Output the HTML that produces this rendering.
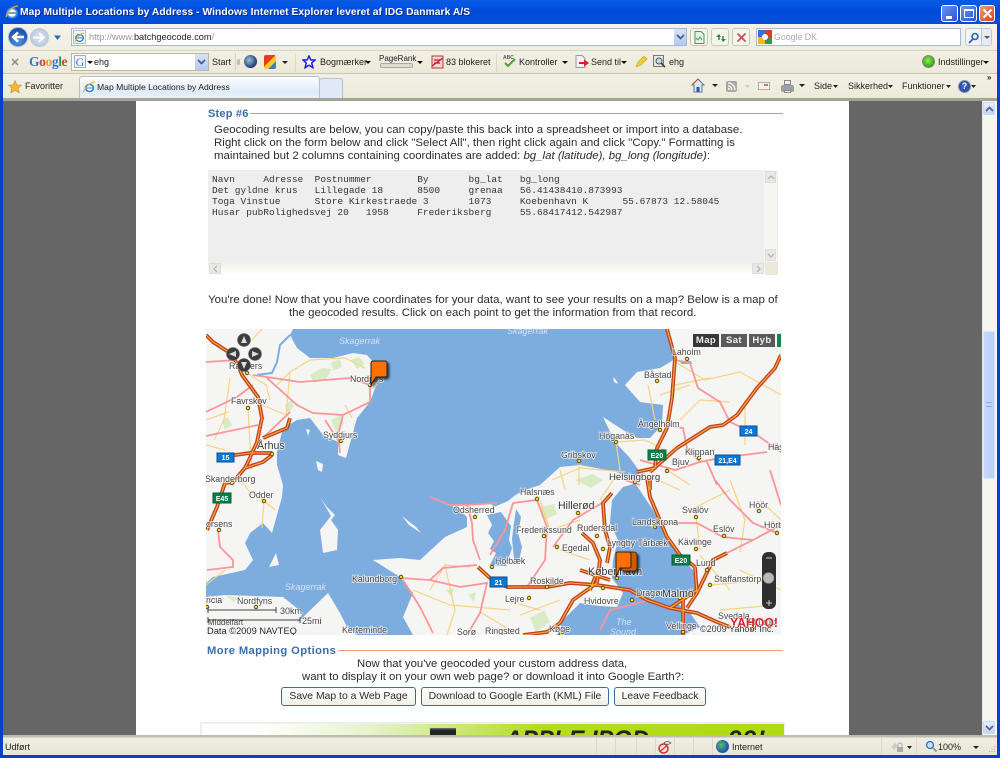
<!DOCTYPE html>
<html><head><meta charset="utf-8"><title>Map Multiple Locations by Address</title>
<style>
html,body{margin:0;padding:0;width:1000px;height:758px;overflow:hidden;background:#ece9d8}
body{position:relative;font-family:"Liberation Sans",sans-serif;color:#222}
div,span,svg{position:absolute;box-sizing:border-box}
.t{white-space:nowrap;font-size:9px;color:#1c1c1c}
.c{white-space:nowrap;font-size:11.46px;color:#2c2c2c;line-height:14px}
.m{font-family:"Liberation Mono",monospace;font-size:9.5px;white-space:pre;color:#333;left:212px}
.btn{height:19px;top:687px;border:1px solid #3e6a96;border-radius:3px;background:linear-gradient(#fff,#f2f0e6);font-size:10.4px;line-height:17px;text-align:center;color:#2c2c2c;white-space:nowrap}
.h{font-weight:bold;color:#3d6da4;font-size:11px;white-space:nowrap}
.sep{width:1px;background:#dcd9c8}
.mb{top:334px;height:13px;width:26px;background:#5a5a5a;color:#eee;font-size:9.5px;font-weight:bold;text-align:center;line-height:13px;letter-spacing:.4px}
svg text{font-family:"Liberation Sans",sans-serif;font-size:8.8px;fill:#444;paint-order:stroke;stroke:#fff;stroke-width:1.6px;stroke-opacity:.8}
svg text.l{font-size:10.6px;fill:#333}
svg text.w{fill:#d4e3f5;stroke:none;font-style:italic;font-size:9px}
svg text.s{fill:#fff;stroke:none;font-size:7px;font-weight:bold;text-anchor:middle}
.pk path{fill:none;stroke:#fd9498;stroke-width:1.8}
.yl path{fill:none;stroke:#f6d384;stroke-width:1.2}
.mo1 path{fill:none;stroke:#c33f22;stroke-width:3.8;stroke-linejoin:round}
.mo2 path{fill:none;stroke:#f5b53c;stroke-width:1.1}
</style></head><body>

<!-- window frame -->
<div style="left:0;top:0;width:1000px;height:24px;background:linear-gradient(#0a5be0 0,#0458e6 3px,#0149d8 12px,#0150dc 21px,#0a4bc8 24px)"></div>
<div style="left:0;top:24px;width:3px;height:734px;background:#0a3fd0"></div>
<div style="left:997px;top:24px;width:3px;height:734px;background:#0a3fd0"></div>
<div style="left:0;top:755px;width:1000px;height:3px;background:#0a3fc8"></div>
<svg style="left:5px;top:5px" width="14" height="14" viewBox="0 0 14 14"><ellipse cx="7" cy="8" rx="5" ry="4.6" fill="#fff" stroke="#3b8fd6" stroke-width="1.7"/><path d="M3 8h8" stroke="#2d7cc4" stroke-width="1.4"/><path d="M1 12C3 6 8 1 13 1" stroke="#f2b233" stroke-width="1.2" fill="none"/></svg>
<div class="t" style="left:20px;top:7px;color:#fff;font-size:10.25px;font-weight:bold;letter-spacing:.05px;text-shadow:1px 1px 0 #0a2a90">Map Multiple Locations by Address - Windows Internet Explorer leveret af IDG Danmark A/S</div>
<div style="left:941px;top:5px;width:17px;height:17px;border:1px solid #fff;border-radius:3px;background:linear-gradient(135deg,#6b94ee,#2a55d5)"><div style="left:4px;top:10px;width:6px;height:3px;background:#fff"></div></div>
<div style="left:960px;top:5px;width:17px;height:17px;border:1px solid #fff;border-radius:3px;background:linear-gradient(135deg,#6b94ee,#2a55d5)"><div style="left:3px;top:3px;width:10px;height:9px;border:1px solid #fff;border-top:2px solid #fff"></div></div>
<div style="left:979px;top:5px;width:16px;height:17px;border:1px solid #fff;border-radius:3px;background:linear-gradient(135deg,#ee9a7c,#d8401c)"><svg style="left:2px;top:2px" width="11" height="11"><path d="M1.5 1.5l8 8M9.5 1.5l-8 8" stroke="#fff" stroke-width="2"/></svg></div>

<!-- address row -->
<div style="left:3px;top:24px;width:994px;height:27px;background:linear-gradient(#f4f3ea,#efeee2);border-bottom:1px solid #d6d3c2"></div>
<div style="left:8px;top:27px;width:20px;height:20px;border-radius:50%;background:radial-gradient(circle at 50% 70%,#5a9de6,#1c4fa8 70%);border:1px solid #9db6d8"></div>
<svg style="left:10px;top:30px" width="16" height="14"><path d="M14 7H4M8 2.5L3 7l5 4.5" fill="none" stroke="#fff" stroke-width="2.4"/></svg>
<div style="left:30px;top:28px;width:19px;height:19px;border-radius:50%;background:radial-gradient(circle,#dde6f2,#aec0d8);border:1px solid #c0cad8"></div>
<svg style="left:32px;top:31px" width="15" height="13"><path d="M1 6.5h10M7 2l4.5 4.5L7 11" fill="none" stroke="#fff" stroke-width="2"/></svg>
<svg style="left:53px;top:35px" width="9" height="6"><path d="M1 .5h7L4.5 5z" fill="#2d6bb0"/></svg>
<div style="left:71px;top:28px;width:616px;height:18px;background:#fff;border:1px solid #a4b8d4"></div>
<svg style="left:73px;top:30px" width="13" height="14"><rect x=".5" y=".5" width="12" height="13" fill="#f6f6f0" stroke="#bbb"/><ellipse cx="6.5" cy="8" rx="3.8" ry="3.4" fill="#fff" stroke="#2c82cc" stroke-width="1.4"/><path d="M3 8h7" stroke="#2c82cc"/><path d="M2 12C4 7 8 3 11 3" stroke="#eaa92c" fill="none"/></svg>
<div class="t" style="left:89px;top:32px;font-size:9.2px;color:#999">http://www.<span style="position:static;color:#222">batchgeocode.com</span>/</div>
<div style="left:674px;top:29px;width:12px;height:16px;background:linear-gradient(#d6e2f8,#b6c9f2)"><svg style="left:2px;top:5px" width="9" height="6"><path d="M1 1l3.500 3.500L8 1" fill="none" stroke="#46587e" stroke-width="1.6"/></svg></div>
<div style="left:690px;top:28px;width:18px;height:18px;border:1px solid #c5c8b8;border-radius:3px;background:#f6f5ec"><svg style="left:3px;top:2px" width="11" height="13"><path d="M1 .5h6l3 3v9H1z" fill="#e8f4e6" stroke="#4a9c58"/><path d="M2 7l2 2 2-3 2 3" fill="none" stroke="#4a9c58"/></svg></div>
<div style="left:711px;top:28px;width:18px;height:18px;border:1px solid #c5c8b8;border-radius:3px;background:#f6f5ec"><svg style="left:2px;top:3px" width="14" height="12"><path d="M2 5l3-3 2 3zM12 7l-3 3-2-3z" fill="#268a3c"/><path d="M5 4v4M9 8V4" stroke="#268a3c" stroke-width="1.4"/></svg></div>
<div style="left:732px;top:28px;width:18px;height:18px;border:1px solid #c5c8b8;border-radius:3px;background:#f6f5ec"><svg style="left:3px;top:3px" width="11" height="11"><path d="M1.5 1.5l8 8M9.5 1.5l-8 8" stroke="#c84c4c" stroke-width="1.7"/></svg></div>
<div style="left:756px;top:28px;width:205px;height:18px;background:#fff;border:1px solid #a4b8d4"></div>
<svg style="left:758px;top:30px" width="14" height="14"><rect width="7" height="7" fill="#3a6fd8"/><rect x="7" width="7" height="7" fill="#d83c2c"/><rect y="7" width="7" height="7" fill="#f0b81c"/><rect x="7" y="7" width="7" height="7" fill="#2e9c44"/><circle cx="7" cy="7" r="3" fill="#fff"/></svg>
<div class="t" style="left:774px;top:32px;font-size:8.8px;color:#aaa">Google DK</div>
<div style="left:965px;top:28px;width:17px;height:18px;border:1px solid #bcc8d8;border-radius:3px 0 0 3px;background:#f2f4f6"><svg style="left:2px;top:3px" width="12" height="12"><circle cx="7" cy="4.500" r="3" fill="none" stroke="#2a5ec4" stroke-width="1.6"/><path d="M5 7l-4 4" stroke="#2a5ec4" stroke-width="1.8"/></svg></div>
<div style="left:982px;top:28px;width:10px;height:18px;border:1px solid #bcc8d8;border-left:0;border-radius:0 3px 3px 0;background:#e6ebf2"><svg style="left:2px;top:7px" width="6" height="4"><path d="M0 0h6L3 3z" fill="#46587e"/></svg></div>

<!-- google toolbar -->
<div style="left:3px;top:51px;width:994px;height:23px;background:linear-gradient(#f2f0e4,#ece9d9);border-bottom:1px solid #c9c6b4"></div>
<svg style="left:11px;top:58px" width="8" height="8"><path d="M1 1l6 6M7 1L1 7" stroke="#8a8a80" stroke-width="1.500"/></svg>
<div style="left:29px;top:54px;font-family:'Liberation Serif',serif;font-weight:bold;font-size:13.5px;letter-spacing:-.4px;white-space:nowrap"><span style="position:static;color:#3a6fd8">G</span><span style="position:static;color:#d83c2c">o</span><span style="position:static;color:#e0a818">o</span><span style="position:static;color:#3a6fd8">g</span><span style="position:static;color:#2e9c44">l</span><span style="position:static;color:#d83c2c">e</span></div>
<div style="left:71px;top:53px;width:138px;height:18px;background:#fff;border:1px solid #b8b6a6"></div>
<div style="left:74px;top:55px;width:12px;height:13px;border:1px solid #8fb0c8;background:#f4f8fa;font-family:'Liberation Serif',serif;font-size:12px;line-height:12px;color:#3a6fd8;text-align:center">G</div>
<svg style="left:87px;top:61px" width="6" height="4"><path d="M0 0h6L3 3z" fill="#111"/></svg>
<div class="t" style="left:94px;top:57px;font-size:9px">ehg</div>
<div style="left:195px;top:54px;width:13px;height:16px;background:linear-gradient(#d6e2f8,#b6c9f2)"><svg style="left:2px;top:5px" width="9" height="6"><path d="M1 1l3.500 3.500L8 1" fill="none" stroke="#46587e" stroke-width="1.600"/></svg></div>
<div class="t" style="left:212px;top:57px">Start</div>
<div style="left:237px;top:59px;width:3px;height:6px;background:#c0bfb2;border-radius:2px"></div><div style="left:235px;top:53px;width:1px;height:18px;background:#d6d3c2"></div>
<div style="left:244px;top:55px;width:13px;height:13px;border-radius:50%;background:radial-gradient(circle at 40% 40%,#9cc0dc,#1c3c70 70%)"></div>
<div style="left:264px;top:55px;width:12px;height:14px;background:linear-gradient(135deg,#e83c1c 45%,#f8cc20 46% 70%,#3c78d8 71%);border-radius:2px"></div>
<svg style="left:282px;top:61px" width="6" height="4"><path d="M0 0h6L3 3z" fill="#222"/></svg>
<div class="sep" style="left:295px;top:53px;height:19px"></div>
<svg style="left:302px;top:55px" width="14" height="14"><path d="M7 1l1.800 4H13L9.700 8l1.200 4.600L7 10.200l-3.900 2.400L4.300 8 1 5h4.200z" fill="#fff" stroke="#1c1cd8" stroke-width="1.500"/></svg>
<div class="t" style="left:320px;top:57px">Bogmærker</div>
<svg style="left:365px;top:61px" width="6" height="4"><path d="M0 0h6L3 3z" fill="#111"/></svg>
<div class="t" style="left:379px;top:54px;font-size:8px">PageRank</div>
<div style="left:380px;top:63px;width:33px;height:5px;background:#dedcd0;border:1px solid #aaa;border-radius:2px"></div>
<svg style="left:417px;top:61px" width="6" height="4"><path d="M0 0h6L3 3z" fill="#111"/></svg>
<svg style="left:431px;top:55px" width="14" height="14"><rect x="1" y="1" width="11" height="12" fill="#f4d4d4" stroke="#b83838"/><path d="M1 11L12 3M3 5h6M3 8h6" stroke="#c01c1c" stroke-width="1.200"/></svg>
<div class="t" style="left:446px;top:57px">83 blokeret</div>
<div class="sep" style="left:496px;top:53px;height:19px"></div>
<svg style="left:503px;top:54px" width="14" height="15"><text x="0" y="5" style="font-size:5px;font-weight:bold;stroke:none;fill:#555">ABC</text><path d="M2 9l3 3 7-7" fill="none" stroke="#4c9c38" stroke-width="2"/></svg>
<div class="t" style="left:519px;top:57px">Kontroller</div>
<svg style="left:562px;top:61px" width="6" height="4"><path d="M0 0h6L3 3z" fill="#111"/></svg>
<svg style="left:575px;top:55px" width="15" height="14"><path d="M1 .5h6l3 3v9H1z" fill="#f4f4f4" stroke="#999"/><path d="M4 7h5V4.500l5 3.500-5 3.500V9H4z" fill="#d81c2c"/></svg>
<div class="t" style="left:591px;top:57px">Send til</div>
<svg style="left:621px;top:61px" width="6" height="4"><path d="M0 0h6L3 3z" fill="#111"/></svg>
<svg style="left:635px;top:55px" width="13" height="14"><path d="M1 12L3 7l6-6 3 3-6 6z" fill="#f0cc34" stroke="#c8a020" stroke-width=".6"/></svg>
<svg style="left:653px;top:55px" width="14" height="14"><rect x=".5" y=".5" width="10" height="11" fill="#e4e8ec" stroke="#777"/><circle cx="6" cy="6" r="3" fill="#c8d8e8" stroke="#555"/><path d="M8 8l4 4" stroke="#444" stroke-width="1.600"/></svg>
<div class="t" style="left:669px;top:57px">ehg</div>
<div style="left:922px;top:55px;width:13px;height:13px;border-radius:50%;background:radial-gradient(circle at 45% 40%,#90ee50,#2ea010 75%);border:1px solid #888"></div>
<div class="t" style="left:938px;top:57px">Indstillinger</div>
<svg style="left:983px;top:61px" width="6" height="4"><path d="M0 0h6L3 3z" fill="#111"/></svg>

<!-- tabs row -->
<div style="left:3px;top:74px;width:994px;height:25px;background:linear-gradient(#f2f0e6,#ecead9)"></div>
<svg style="left:8px;top:80px" width="14" height="14"><path d="M7 .5l2 4.500h4.500L10 8l1.300 5L7 10.200 2.700 13 4 8 .5 5H5z" fill="#f4b838" stroke="#c88c20" stroke-width=".6"/></svg>
<div class="t" style="left:25px;top:81px">Favoritter</div>
<div style="left:79px;top:76px;width:241px;height:22px;background:linear-gradient(#fdfdfd,#dfeaf8 70%,#e8f0fa);border:1px solid #b8c0c8;border-bottom:0;border-radius:3px 3px 0 0"></div>
<svg style="left:83px;top:80px" width="13" height="14"><ellipse cx="6.500" cy="8" rx="4" ry="3.500" fill="#fff" stroke="#2c82cc" stroke-width="1.500"/><path d="M3 8h7" stroke="#2c82cc"/><path d="M.5 12C3 6 8 2 12 2" stroke="#eaa92c" fill="none"/></svg>
<div class="t" style="left:97px;top:82px;font-size:8.6px">Map Multiple Locations by Address</div>
<div style="left:319px;top:78px;width:24px;height:20px;background:#e0e9f6;border:1px solid #b8c0c8;border-bottom:0;border-radius:3px 3px 0 0"></div>
<svg style="left:691px;top:78px" width="14" height="15"><path d="M7 1L1 7h2v7h8V7h2z" fill="#dfe6f0" stroke="#5a7a9c"/><rect x="5.500" y="9" width="3" height="5" fill="#2858a8"/><path d="M7 1L1 7" stroke="#c85020"/></svg>
<svg style="left:712px;top:84px" width="6" height="4"><path d="M0 0h6L3 3z" fill="#222"/></svg>
<div style="left:726px;top:81px;width:11px;height:11px;background:#a8a8a0;border-radius:2px"></div>
<svg style="left:727px;top:82px" width="9" height="9"><path d="M1 1a7 7 0 0 1 7 7M1 4a4 4 0 0 1 4 4" stroke="#fff" fill="none" stroke-width="1.200"/><circle cx="2" cy="7" r="1" fill="#fff"/></svg>
<svg style="left:745px;top:85px" width="5" height="3"><path d="M0 0h5L2.500 3z" fill="#ccc"/></svg>
<div style="left:758px;top:82px;width:12px;height:8px;background:#f4f2ee;border:1px solid #b0b0a8"></div>
<div style="left:764px;top:84px;width:4px;height:2px;background:#d87070"></div>
<div style="left:781px;top:85px;width:13px;height:7px;background:#99a0a6;border-radius:2px"></div>
<div style="left:784px;top:80px;width:7px;height:5px;background:#f0f0f0;border:1px solid #888"></div>
<div style="left:784px;top:90px;width:7px;height:3px;background:#fff;border:1px solid #888"></div>
<svg style="left:799px;top:84px" width="6" height="4"><path d="M0 0h6L3 3z" fill="#222"/></svg>
<div class="t" style="left:814px;top:81px">Side</div><svg style="left:833px;top:85px" width="5" height="3"><path d="M0 0h5L2.500 3z" fill="#222"/></svg>
<div class="t" style="left:848px;top:81px">Sikkerhed</div><svg style="left:888px;top:85px" width="5" height="3"><path d="M0 0h5L2.500 3z" fill="#222"/></svg>
<div class="t" style="left:902px;top:81px">Funktioner</div><svg style="left:946px;top:85px" width="5" height="3"><path d="M0 0h5L2.500 3z" fill="#222"/></svg>
<div style="left:958px;top:80px;width:13px;height:13px;border-radius:50%;background:radial-gradient(circle,#3f6cd0,#1c3a90);border:1px solid #8898b8;color:#fff;font-size:9px;font-weight:bold;line-height:11px;text-align:center">?</div>
<svg style="left:971px;top:85px" width="5" height="3"><path d="M0 0h5L2.500 3z" fill="#222"/></svg>
<div class="t" style="left:987px;top:73px;font-size:8px;font-weight:bold">»</div>
<div style="left:3px;top:98px;width:994px;height:3px;background:#a4a397"></div>

<!-- page -->
<div style="left:3px;top:101px;width:979px;height:634px;background:#666"></div>
<div style="left:136px;top:101px;width:713px;height:634px;background:#fff;overflow:hidden"></div>
<!-- scrollbar -->
<div style="left:982px;top:101px;width:15px;height:634px;background:#f6f6f0;border-left:1px solid #e8e8e0"></div>
<div style="left:983px;top:102px;width:12px;height:13px;background:linear-gradient(#e6eeff,#c4d5fa);border:1px solid #c8d8f8;border-radius:2px"><svg style="left:1px;top:3px" width="9" height="6"><path d="M1 5l3.500-3.500L8 5" fill="none" stroke="#4d6185" stroke-width="1.700"/></svg></div>
<div style="left:983px;top:331px;width:12px;height:148px;background:linear-gradient(90deg,#c9d8fb,#b8cdf8);border:1px solid #dae4fa;border-radius:2px"></div>
<div style="left:986px;top:402px;width:6px;height:5px;border-top:1px solid #8ea8de;border-bottom:1px solid #8ea8de"></div>
<div style="left:983px;top:721px;width:12px;height:13px;background:linear-gradient(#e6eeff,#c4d5fa);border:1px solid #c8d8f8;border-radius:2px"><svg style="left:1px;top:3px" width="9" height="6"><path d="M1 1l3.500 3.500L8 1" fill="none" stroke="#4d6185" stroke-width="1.700"/></svg></div>

<!-- step heading -->
<div class="h" style="left:208px;top:108px;letter-spacing:.2px">Step #6</div>
<div style="left:250px;top:113px;width:533px;height:1px;background:#f08e6e"></div>
<div class="c" style="left:214px;top:123px">Geocoding results are below, you can copy/paste this back into a spreadsheet or import into a database.</div>
<div class="c" style="left:214px;top:136px">Right click on the form below and click "Select All", then right click again and click "Copy." Formatting is</div>
<div class="c" style="left:214px;top:149px">maintained but 2 columns containing coordinates are added: <i>bg_lat (latitude), bg_long (longitude)</i>:</div>

<!-- textarea -->
<div style="left:208px;top:170px;width:570px;height:105px;background:#eee"></div>
<div style="left:208px;top:262px;width:570px;height:13px;background:linear-gradient(#f0efe6,#fff)"></div>
<div style="left:764px;top:170px;width:13px;height:92px;background:#f6f6f0"></div>
<div style="left:765px;top:171px;width:11px;height:12px;background:#e8e8e4;border:1px solid #ddd"><svg style="left:1px;top:3px" width="8" height="5"><path d="M1 4l3-3 3 3" fill="none" stroke="#aaa"/></svg></div>
<div style="left:765px;top:249px;width:11px;height:12px;background:#e8e8e4;border:1px solid #ddd"><svg style="left:1px;top:3px" width="8" height="5"><path d="M1 1l3 3 3-3" fill="none" stroke="#aaa"/></svg></div>
<div style="left:209px;top:263px;width:12px;height:11px;background:#e8e8e4;border:1px solid #ddd"><svg style="left:3px;top:1px" width="5" height="8"><path d="M4 1L1 4l3 3" fill="none" stroke="#aaa"/></svg></div>
<div style="left:752px;top:263px;width:12px;height:11px;background:#e8e8e4;border:1px solid #ddd"><svg style="left:3px;top:1px" width="5" height="8"><path d="M1 1l3 3-3 3" fill="none" stroke="#aaa"/></svg></div>
<div style="left:765px;top:262px;width:13px;height:13px;background:#ece9d8"></div>
<div class="m" style="top:174px">Navn     Adresse  Postnummer        By       bg_lat   bg_long</div>
<div class="m" style="top:185px">Det gyldne krus   Lillegade 18      8500     grenaa   56.41438410.873993</div>
<div class="m" style="top:196px">Toga Vinstue      Store Kirkestraede 3       1073     Koebenhavn K      55.67873 12.58045</div>
<div class="m" style="top:207px">Husar pubRolighedsvej 20   1958     Frederiksberg     55.68417412.542987</div>

<div class="c" style="left:208px;top:293px">You're done! Now that you have coordinates for your data, want to see your results on a map? Below is a map of</div>
<div class="c" style="left:289px;top:306px">the geocoded results. Click on each point to get the information from that record.</div>

<!-- MAP -->
<svg style="left:206px;top:329px" width="575" height="306" viewBox="206 329 575 306">
<rect x="206" y="329" width="575" height="306" fill="#7dacdf"/>
<!-- land -->
<g fill="#f5f5f4">
<path d="M206 329H293L290 335 297 348 310 358 333 358 353 353 367 355 373 362 377 383 370 402 357 418 346 458 338 455 338 442 323 435 310 418 297 420 283 428 277 452 277 465 283 485 282 497 272 533 263 523 250 533 245 543 253 560 245 570 213 577 206 583Z"/>
<path d="M206 597L225 595 283 597 303 613 297 623 328 593 340 613 347 627 357 635H206Z"/>
<path d="M320 497L327 507 335 515 331 520 338 530 337 550 323 553 320 530 331 516Z"/>
<path d="M430 497L450 505 467 505 500 503 525 490 540 485 560 467 580 465 617 472 637 483 623 487 612 500 610 523 618 540 613 560 612 578 623 593 617 607 600 606 580 603 563 620 557 635H413L403 617 413 593 400 577 373 560 400 558 420 560 445 537 467 527 467 517 457 508Z"/>
<path d="M667 329H781V635H683L700 627 690 613 677 603 697 587 693 570 677 553 663 530 653 510 633 480 640 472 630 458 615 442 603 417 623 430 637 438 650 438 662 425 663 405 640 402 625 385 637 372 660 368 677 358 672 348Z"/>
<path d="M640 635L628 615 634 600 622 610 620 635Z" fill="#7dacdf"/>
<path d="M230 540l8-4 6 3-7 5zM306 429l4 1-2 6zM316 461l7 3-1 8-4-2zM402 516l14 11 5 6-12-8zM435 548l3 6-3 4zM276 553l3 12-10 2zM490 505l7 2-1 5z"/>
<path d="M613 377l3 3 2 4-4-2z"/>
</g>
<!-- fjords on Zealand -->
<g fill="#7dacdf">
<path d="M487 515l14 -3 10 14 -2 14 3 8 -6 18 -16 -1 6 -12 -6 -4 4 -8 -6 -8 4 -8z"/>
<path d="M516 509l5 8 -3 16 4 14 -3 14 -5 -2 -2 -20 2 -16z"/>
<path d="M490 503l14 -6 8 -12 6 8 -10 8 -14 6z"/>
<path d="M679 361h12l1 3h-10z"/>
</g>
<path d="M290 335L280 345 277 362 272 373 257 375" fill="none" stroke="#7dacdf" stroke-width="2"/>
<!-- green patches -->
<g fill="#d9ebc5">
<path d="M310 375l12-7 10 1-6 10-12 4zM351 360l8-3 6 7-8 5zM330 363l10-4 2 8-8 3zM222 420l6-3 4 8-7 5zM285 405l6-5 3 6-6 8zM331 420l10-5 3 8-7 12zM446 590l8-2-2 10zM468 595l8-3-2 10zM575 480l18-6 10 6-12 8zM540 507l14-3 3 10-12 6zM530 618l14-8 6 12-14 10zM650 525l6-2-2 7zM225 595l14 3-6 4z"/>
</g>
<!-- yellow roads -->
<g class="yl">
<path d="M252 340L262 329M230 378L224 420 214 440M247 373L266 385 270 400M290 372L310 360 345 358 365 368M277 385L290 372 286 415M248 408L250 445 252 470M206 420L228 412M206 445L225 450M262 405L286 415M345 405L352 418M370 385L378 385M264 501L248 490 240 478M264 501L275 510M264 501L262 528M206 585L225 570M430 590L445 565 455 610 447 635M413 590L450 605 510 610M480 612L510 630M445 565L470 567M625 472L580 468 552 480M579 461L579 485M560 470L565 490M672 360L705 380 740 372 781 395M675 385L710 378M648 385L655 420M660 395L690 385M700 400L730 402M680 420L700 400M616 442L620 470M616 442L645 440 665 450M667 470L690 485M640 472L680 490M745 400L745 445M760 500L781 520M730 480L745 520 740 552M690 510L730 490M696 517L700 550M710 585L770 580M740 570L781 590M720 610L775 605M540 500L550 530 580 520M560 550L590 560M505 600L540 610M520 615L560 600M600 500L620 470M700 555L730 590"/>
</g>
<!-- pink roads -->
<g class="pk">
<path d="M253 375L300 382 350 378 370 385 370 402 343 415 338 435 340 453M267 378L297 405 313 413 343 415M290 412L263 438M206 362L237 360M206 412L237 397 253 385M206 436L258 425M325 420L338 440M675 360L690 363 698 388 720 402 730 422 757 435 781 452M663 425L683 428 687 448 700 462 720 458 767 452M717 485L707 462M715 480L730 500 753 523 777 533M727 553L753 540 781 525M657 523L697 523 723 537 753 540M430 497L450 505 467 505 497 503M472 523L473 540 480 560M467 505L472 523M400 578L430 580 443 568 477 565M430 580L460 587 487 583 480 613 467 635M403 580L420 607 433 633M513 503L537 500 547 527 545 560 527 587M513 503L505 530 490 555M553 547L573 520 607 500M218 530L220 547 233 560 233 567 207 570M640 460L675 470 700 462M770 470L781 505M650 600L610 610 600 630M625 480L640 485"/>
</g>
<!-- motorways -->
<g class="mo1">
<path d="M206 335L213 342 230 353 238 365 242 375 258 397 262 418 257 442 248 462 245 468 233 482 225 483 217 507 207 530"/>
<path d="M290 418L287 428 263 438M220 457L250 453 272 453M245 468L263 462 272 455"/>
<path d="M667 329L675 358 672 398 667 428 657 448 655 468 637 472M781 355L775 368 757 388 737 415 723 425 710 427 677 448 650 472M647 478L650 497 667 537 680 555 695 567 697 593 687 608M727 553L713 560 697 593"/>
<path d="M612 493L603 503 605 530 610 547 607 563M582 533L593 543 600 560 597 583 573 600 560 623 547 632 523 635M478 567L490 578 507 587 527 587 547 587 570 583 597 585 630 590 647 600 670 608 697 613 717 622 730 627M683 600L683 635M670 608L697 590M600 565L590 590M580 570L610 580M650 478V490"/>
</g>
<g class="mo2">
<path d="M206 335L213 342 230 353 238 365 242 375 258 397 262 418 257 442 248 462 245 468 233 482 225 483 217 507 207 530"/>
<path d="M290 418L287 428 263 438M220 457L250 453 272 453M245 468L263 462 272 455"/>
<path d="M667 329L675 358 672 398 667 428 657 448 655 468 637 472M781 355L775 368 757 388 737 415 723 425 710 427 677 448 650 472M647 478L650 497 667 537 680 555 695 567 697 593 687 608M727 553L713 560 697 593"/>
<path d="M612 493L603 503 605 530 610 547 607 563M582 533L593 543 600 560 597 583 573 600 560 623 547 632 523 635M478 567L490 578 507 587 527 587 547 587 570 583 597 585 630 590 647 600 670 608 697 613 717 622 730 627M683 600L683 635M670 608L697 590M600 565L590 590M580 570L610 580M650 478V490"/>
</g>
<!-- dots -->
<g fill="#ffd800" stroke="#333" stroke-width=".8">
<circle cx="247" cy="373" r="1.800"/><circle cx="248" cy="408" r="1.800"/><circle cx="370" cy="385" r="1.800"/><circle cx="272" cy="454" r="1.800"/><circle cx="341" cy="441" r="1.800"/><circle cx="232" cy="483" r="1.800"/><circle cx="264" cy="501" r="1.800"/><circle cx="219" cy="530" r="1.800"/><circle cx="475" cy="517" r="1.800"/><circle cx="401" cy="577" r="1.800"/><circle cx="256" cy="607" r="1.800"/><circle cx="207" cy="607" r="1.800"/><circle cx="537" cy="499" r="1.800"/><circle cx="578" cy="513" r="1.800"/><circle cx="597" cy="536" r="1.800"/><circle cx="544" cy="536" r="1.800"/><circle cx="557" cy="547" r="1.800"/><circle cx="603" cy="549" r="1.800"/><circle cx="492" cy="567" r="1.800"/><circle cx="617" cy="578" r="1.800"/><circle cx="547" cy="587" r="1.800"/><circle cx="529" cy="598" r="1.800"/><circle cx="603" cy="588" r="1.800"/><circle cx="632" cy="600" r="1.800"/><circle cx="680" cy="598" r="1.800"/><circle cx="561" cy="635" r="1.800"/><circle cx="683" cy="632" r="1.800"/><circle cx="655" cy="527" r="1.800"/><circle cx="696" cy="517" r="1.800"/><circle cx="696" cy="549" r="1.800"/><circle cx="724" cy="536" r="1.800"/><circle cx="759" cy="511" r="1.800"/><circle cx="777" cy="533" r="1.800"/><circle cx="707" cy="570" r="1.800"/><circle cx="710" cy="585" r="1.800"/><circle cx="687" cy="359" r="1.800"/><circle cx="657" cy="381" r="1.800"/><circle cx="660" cy="430" r="1.800"/><circle cx="616" cy="442" r="1.800"/><circle cx="579" cy="461" r="1.800"/><circle cx="635" cy="482" r="1.800"/><circle cx="699" cy="458" r="1.800"/><circle cx="667" cy="471" r="1.800"/><circle cx="753" cy="629" r="1.800"/>
</g>
<!-- shields -->
<g>
<rect x="217" y="453" width="17" height="9" fill="#0a78d8" stroke="#0c4f8a"/><text class="s" x="225.500" y="460">15</text>
<rect x="213" y="493" width="18" height="10" fill="#088048" stroke="#06603a"/><text class="s" x="222" y="501">E45</text>
<rect x="648" y="450" width="18" height="10" fill="#088048" stroke="#06603a"/><text class="s" x="657" y="458">E20</text>
<rect x="740" y="426" width="17" height="10" fill="#0a78d8" stroke="#0c4f8a"/><text class="s" x="748.500" y="434">24</text>
<rect x="715" y="455" width="25" height="10" fill="#0a78d8" stroke="#0c4f8a"/><text class="s" x="727.500" y="463">21,E4</text>
<rect x="490" y="577" width="17" height="10" fill="#0a78d8" stroke="#0c4f8a"/><text class="s" x="498.500" y="585">21</text>
<rect x="672" y="555" width="18" height="10" fill="#088048" stroke="#06603a"/><text class="s" x="681" y="563">E20</text>
</g>
<!-- labels -->
<text x="229" y="369">Randers</text><text x="231" y="404">Favrskov</text><text x="350" y="382">Nordjurs</text><text class="l" x="257" y="449">Århus</text><text x="323" y="438">Syddjurs</text><text x="205" y="482">Skanderborg</text><text x="249" y="498">Odder</text><text x="206" y="527">orsens</text><text x="453" y="513">Odsherred</text><text x="352" y="582">Kalundborg</text><text x="237" y="604">Nordfyns</text><text x="206" y="603">ricia</text><text x="342" y="633">Kerteminde</text><text x="457" y="635">Sorø</text><text x="485" y="634">Ringsted</text>
<text x="520" y="495">Halsnæs</text><text class="l" x="558" y="509">Hillerød</text><text x="577" y="531">Rudersdal</text><text x="516" y="533">Frederikssund</text><text x="562" y="551">Egedal</text><text x="607" y="546">Lyngby Tårbæk</text><text x="495" y="564">Holbæk</text><text class="l" x="588" y="575">København</text><text x="530" y="584">Roskilde</text><text x="505" y="602">Lejre</text><text x="584" y="604">Hvidovre</text><text x="636" y="596">Dragør</text><text class="l" x="662" y="597">Malmö</text><text x="549" y="632">Køge</text><text x="666" y="629">Vellinge</text><text x="632" y="525">Landskrona</text><text x="682" y="513">Svalöv</text><text x="678" y="545">Kävlinge</text><text x="713" y="532">Eslöv</text><text x="749" y="508">Höör</text><text x="764" y="528">Hörby</text><text x="696" y="566">Lund</text><text x="714" y="582">Staffanstorp</text><text x="718" y="619">Svedala</text><text x="748" y="625">Skurup</text>
<text x="672" y="355">Laholm</text><text x="644" y="378">Båstad</text><text x="638" y="427">Ängelholm</text><text x="599" y="439">Höganäs</text><text x="561" y="458">Gribskov</text><text class="l" x="609" y="480" style="font-size:9.6px">Helsingborg</text><text x="685" y="455">Klippan</text><text x="672" y="465">Bjuv</text><text x="768" y="450">Häs</text>
<text class="w" x="339" y="344">Skagerrak</text><text class="w" x="507" y="334">Skagerrak</text><text class="w" x="285" y="590">Skagerrak</text><text class="w" x="616" y="625">The</text><text class="w" x="610" y="635">Sound</text>
<!-- markers -->
<path d="M373 361h12a2 2 0 0 1 2 2v12a2 2 0 0 1-2 2h-9l-5 8v-22a2 2 0 0 1 2-2z" fill="#ff7000" stroke="#222" stroke-width="1" style="filter:drop-shadow(2px 2px 1px rgba(0,0,0,.65))"/>
<rect x="621" y="552" width="16" height="19" rx="3" fill="#cc5c00" stroke="#222" stroke-width=".8" style="filter:drop-shadow(2px 2px 1px rgba(0,0,0,.65))"/>
<path d="M617 552h12a2 2 0 0 1 2 2v12a2 2 0 0 1-2 2h-9l-4 9v-23a2 2 0 0 1 1-2z" fill="#ff7000" stroke="#222" stroke-width="1"/>
<!-- scale -->
<path d="M208 607v6M208 610h68M276 607v6M208 617v6M208 620h92M300 617v6" stroke="#444" stroke-width="1" fill="none"/>
<text x="280" y="614" style="font-size:9px;stroke-width:1px">30km</text><text x="302" y="624" style="font-size:9px;stroke-width:1px">25mi</text>
<text x="208" y="625" style="font-size:8px;stroke:none">Middelfart</text>
<text x="207" y="634" style="font-size:9.300px;fill:#222;stroke-width:1px">Data ©2009 NAVTEQ</text>
<text x="730" y="627" style="font-size:13px;font-weight:bold;fill:#e0202c;stroke:#fff;stroke-width:1px" textLength="48" lengthAdjust="spacingAndGlyphs">YAHOO!</text>
<text x="700" y="632" style="font-size:9px;fill:#333;stroke-width:1px">©2009 Yahoo! Inc.</text>
<!-- nav -->
<g fill="#3c3c3c" stroke="#6a6a6a" stroke-width=".6">
<circle cx="244" cy="340" r="6.500"/><circle cx="233" cy="354" r="6.500"/><circle cx="255" cy="354" r="6.500"/><circle cx="244" cy="365" r="6.500"/>
</g>
<path d="M244 336l3 7h-6zM229 354l7-3v6zM259 354l-7-3v6zM244 369l3-7h-6z" fill="#ddd"/>
<!-- zoom -->
<rect x="762" y="552" width="14" height="57" rx="6" fill="#2f2f2f"/>
<path d="M766 558h6M766 603h6M769 600v6" stroke="#ccc" stroke-width="1"/>
<circle cx="768.500" cy="578" r="5.500" fill="#b8b8b8" stroke="#777" stroke-width=".6"/>
</svg>
<div class="mb" style="left:693px;background:#383838">Map</div>
<div class="mb" style="left:721px">Sat</div>
<div class="mb" style="left:749px">Hyb</div>
<div style="left:777px;top:334px;width:4px;height:13px;background:#0a8a4c"></div>

<!-- more mapping -->
<div class="h" style="left:207px;top:645px;font-size:11.2px;letter-spacing:.4px">More Mapping Options</div>
<div style="left:339px;top:650px;width:444px;height:1px;background:#f49a80"></div>
<div class="c" style="left:357px;top:657px;font-size:11.35px">Now that you've geocoded your custom address data,</div>
<div class="c" style="left:302px;top:670px;font-size:11.35px">want to display it on your own web page? or download it into Google Earth?:</div>
<div class="btn" style="left:281px;width:135px">Save Map to a Web Page</div>
<div class="btn" style="left:421px;width:188px">Download to Google Earth (KML) File</div>
<div class="btn" style="left:614px;width:92px">Leave Feedback</div>

<!-- banner -->
<div style="left:200px;top:722px;width:585px;height:13px;background:#eee"></div>
<div style="left:202px;top:724px;width:582px;height:11px;overflow:hidden;background:linear-gradient(90deg,#fff 0,#fff 10%,#e4f2c8 30%,#c6e45c 48%,#b4dc18 58%,#b0dc10 100%)">
<div style="left:228px;top:4px;width:26px;height:7px;background:linear-gradient(#777,#222 35%)"></div>
<div style="left:303px;top:2px;font:italic bold 23.8px 'Liberation Sans',sans-serif;color:#222;white-space:nowrap">APPLE IPOD</div>
<div style="left:526px;top:2px;font:italic bold 24.4px 'Liberation Sans',sans-serif;color:#222;white-space:nowrap;letter-spacing:1px">99!</div>
</div>

<!-- status bar -->
<div style="left:3px;top:735px;width:994px;height:20px;background:linear-gradient(#bdbcb0 0,#bdbcb0 2px,#f0eee2 3px,#e9e6d6 100%)"></div>
<div class="t" style="left:5px;top:742px">Udført</div>
<div class="sep" style="left:596px;top:738px;height:17px"></div><div class="sep" style="left:615px;top:738px;height:17px"></div><div class="sep" style="left:636px;top:738px;height:17px"></div><div class="sep" style="left:655px;top:738px;height:17px"></div><div class="sep" style="left:674px;top:738px;height:17px"></div><div class="sep" style="left:693px;top:738px;height:17px"></div><div class="sep" style="left:712px;top:738px;height:17px"></div><div class="sep" style="left:881px;top:738px;height:17px"></div><div class="sep" style="left:916px;top:738px;height:17px"></div>
<svg style="left:658px;top:740px" width="14" height="14"><circle cx="5.500" cy="8.500" r="4.500" fill="#f4e4e4" stroke="#d83030" stroke-width="1.500"/><path d="M2.500 11l6-5" stroke="#d83030" stroke-width="1.300"/><path d="M6 3q3-3 7 0-4 3-7 0z" fill="#ddd" stroke="#555" stroke-width=".7"/></svg>
<div style="left:716px;top:740px;width:13px;height:13px;border-radius:50%;background:radial-gradient(circle at 40% 40%,#5cc060,#1c5cb0 60%)"></div>
<div class="t" style="left:732px;top:742px">Internet</div>
<svg style="left:890px;top:741px" width="14" height="12"><path d="M1 6l4-4 3 3-4 4z" fill="#ccc"/><rect x="7" y="6" width="6" height="5" fill="#aaa"/><path d="M8 6V4a2 2 0 0 1 4 0v2" fill="none" stroke="#aaa"/></svg>
<svg style="left:907px;top:746px" width="5" height="3"><path d="M0 0h5L2.500 3z" fill="#222"/></svg>
<svg style="left:925px;top:740px" width="12" height="13"><circle cx="5" cy="5" r="3.500" fill="#c8e0f8" stroke="#2a6cc0" stroke-width="1.300"/><path d="M7.500 7.500l4 4" stroke="#888" stroke-width="1.600"/></svg>
<div class="t" style="left:938px;top:742px">100%</div>
<svg style="left:973px;top:746px" width="6" height="3"><path d="M0 0h6L3 3z" fill="#222"/></svg>
<svg style="left:988px;top:745px" width="8" height="8"><path d="M6 1h1v1H6zM3.500 3.500h1v1h-1zM6 3.500h1v1H6zM1 6h1v1H1zM3.500 6h1v1h-1zM6 6h1v1H6z" fill="#aaa89a"/></svg>
</body></html>
